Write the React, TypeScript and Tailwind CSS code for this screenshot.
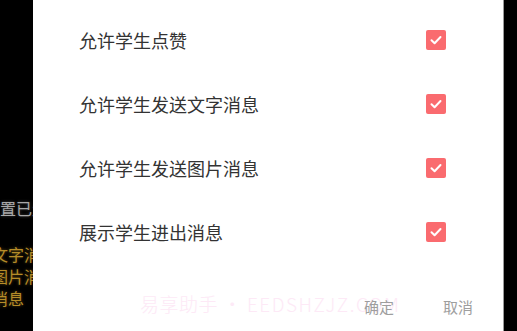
const rows = ["允许学生点赞", "允许学生发送文字消息", "允许学生发送图片消息", "展示学生进出消息"];

const font = { fontFamily: '"Noto Sans CJK SC", "Noto Sans", sans-serif' };

const CheckBox = () => (
  <div className="w-5 h-5 rounded-[2px] bg-[#fa6b6f] flex items-center justify-center">
    <svg width="14" height="14" viewBox="0 0 14 14" fill="none">
      <path d="M2.5 7.2 L5.6 10.2 L11.5 4" stroke="white" strokeWidth="2" strokeLinecap="round" strokeLinejoin="round" />
    </svg>
  </div>
);

export default function App() {
  return (
    <div className="w-[517px] h-[331px] bg-black flex overflow-hidden" style={font}>
      <div className="w-[33px] h-full overflow-hidden flex flex-col text-[16px] leading-[22px] whitespace-nowrap">
        <div className="h-[197px]" />
        <div className="text-[#a8a8a8] [text-shadow:0_0_3px_rgba(255,255,255,0.3)]">置已生效</div>
        <div className="h-[24px]" />
        <div className="ml-[-40px] text-[#b58c28] [text-shadow:0_0_3px_rgba(200,150,40,0.5)]">发送文字消息</div>
        <div className="ml-[-40px] text-[#b58c28] [text-shadow:0_0_3px_rgba(200,150,40,0.5)]">发送图片消息</div>
        <div className="ml-[-40px] text-[#b58c28] [text-shadow:0_0_3px_rgba(200,150,40,0.5)]">进出消息</div>
      </div>
      <div className="relative w-[471px] h-full bg-white border-r border-[#9a9a9a] flex flex-col pt-2">
        {rows.map((r) => (
          <div key={r} className="h-16 flex items-center justify-between pl-[46px] pr-[57px]">
            <span className="text-[18px] text-[#333333]">{r}</span>
            <CheckBox />
          </div>
        ))}
        <div className="flex-1 flex items-center justify-end gap-[49px] pr-[30px] pt-[20px] text-[15px] text-[#9e9e9e]">
          <span className="relative z-10">确定</span>
          <span>取消</span>
        </div>
        <div className="absolute left-[107px] top-[290px] text-[19px] font-light text-[#fde9f6] whitespace-nowrap pointer-events-none tracking-[0.5px]">
          易享助手 • <span className="tracking-[1.5px]">EEDSHZJZ.COM</span>
        </div>
      </div>
    </div>
  );
}
